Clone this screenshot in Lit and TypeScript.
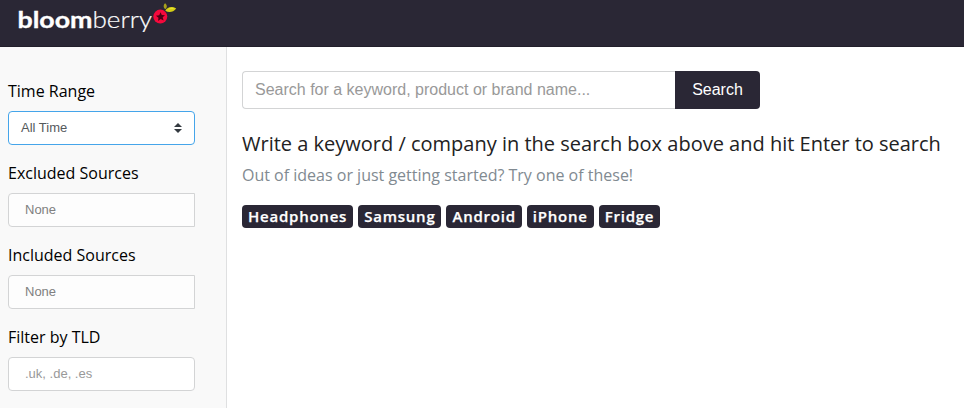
import { LitElement, html, css } from "lit";
import { customElement } from "lit/decorators.js";

@customElement("brand-logo")
class BrandLogo extends LitElement {
  static styles = css`
    :host { display: block; height: 36px; }
    svg { display: block; }
    text { font-family: Lato, sans-serif; fill: #fff; font-size: 23px; }
    .bold { font-weight: 700; stroke: #fff; stroke-width: 0.35px; }
    .light { font-weight: 300; stroke: #fff; stroke-width: 0.2px; }
  `;
  render() {
    return html`<svg width="162" height="36" viewBox="16 0 162 36">
      <text class="bold" x="17.500" y="28" textLength="75" lengthAdjust="spacingAndGlyphs">bloom</text>
      <text class="light" x="92.500" y="28" textLength="59.500" lengthAdjust="spacingAndGlyphs">berry</text>
      <circle cx="160.300" cy="16.600" r="7" fill="#f5093c" />
      <path d="M160.600 12.200l1.200 2.900 3.200.1-2.300 2.100.9 3.300-2.900-1.600-2.700 2.100.5-3.400-2.600-1.900 3.300-.6z" fill="#4a0014" />
      <path d="M165.300 9.300C163 7.500 163.300 4.800 165.200 3.300C167.300 5 167.600 7.400 165.300 9.300Z" fill="#a8a01c" />
      <path d="M165.300 10.800C167.500 7 171.500 5.900 176.200 8.500C173.500 12.300 168.800 13.100 165.300 10.800Z" fill="#d5cf16" />
      <path d="M167.500 9.600Q171 7.300 175 8.500Q171 8.700 167.500 9.600Z" fill="#f3ee4a" />
    </svg>`;
  }
}

@customElement("app-root")
class AppRoot extends LitElement {
  static styles = css`
    :host {
      display: flex;
      flex-direction: column;
      height: 408px;
      overflow: hidden;
      background: #fff;
      font-family: "Open Sans", sans-serif;
      font-size: 16px;
      line-height: 24px;
      color: #212529;
    }
    * { box-sizing: border-box; }
    header {
      flex: none;
      height: 47px;
      padding-left: 16px;
      background: #2a2735;
      border-bottom: 1px solid #221f2b;
    }
    .body { flex: 1; display: flex; min-height: 0; }
    aside {
      flex: none;
      width: 227px;
      padding: 32px 31px 0 8px;
      background: #f9f9f9;
      border-right: 1px solid #dfe0e1;
      color: #000;
    }
    .field { margin-bottom: 16px; }
    .label { display: block; margin-bottom: 8px; white-space: nowrap; }
    .control {
      display: flex;
      align-items: center;
      justify-content: space-between;
      width: 187px;
      height: 34px;
      padding: 0 12px 0 16px;
      border: 1px solid #d3d4d5;
      border-radius: 4px;
      background: #fff;
      font: 13px/20px "Liberation Sans", Arial, sans-serif;
      color: #999;
    }
    .select { padding-left: 12px; border-color: #45a5ea; color: #55595c; }
    .tags { border-radius: 4px 0 0 4px; background: #fdfdfd; color: #808080; }
    main { flex: 1; padding: 24px 0 0 15px; white-space: nowrap; }
    .search { display: flex; width: 518px; height: 38px; font: 16px/36px "Liberation Sans", Arial, sans-serif; }
    .query {
      flex: 1;
      padding-left: 12px;
      border: 1px solid #d3d4d5;
      border-right: 0;
      border-radius: 4px 0 0 4px;
      color: #999;
    }
    .go {
      width: 85px;
      padding-top: 1px;
      text-align: center;
      background: #2a2735;
      color: #fff;
      border-radius: 0 4px 4px 0;
    }
    h1 { margin: 23px 0 0; font-size: 20px; line-height: 24px; font-weight: 400; color: #222; }
    p { margin: 7px 0 0; color: #818a91; }
    .chips { display: flex; gap: 5px; margin-top: 18px; }
    .chip {
      height: 23px;
      padding: 0 6px;
      border-radius: 4px;
      background: #2a2735;
      color: #fff;
      font-size: 15px;
      line-height: 23px;
      font-weight: 600;
      letter-spacing: 0.77px;
      -webkit-text-stroke: 0.25px #fff;
    }
  `;

  private suggestions = ["Headphones", "Samsung", "Android", "iPhone", "Fridge"];

  private fields = [
    { label: "Time Range", text: "All Time", kind: "select" },
    { label: "Excluded Sources", text: "None", kind: "tags" },
    { label: "Included Sources", text: "None", kind: "tags" },
    { label: "Filter by TLD", text: ".uk, .de, .es", kind: "plain" },
  ];

  render() {
    return html`
      <header><brand-logo></brand-logo></header>
      <div class="body">
        <aside>
          ${this.fields.map(
            (f) => html`<div class="field">
              <span class="label">${f.label}</span>
              <div class="control ${f.kind}">
                <span>${f.text}</span>
                ${f.kind === "select"
                  ? html`<svg width="8" height="10" viewBox="0 0 8 10"><path d="M0 4L4 0l4 4zM0 6h8L4 10z" fill="#343a40" /></svg>`
                  : null}
              </div>
            </div>`
          )}
        </aside>
        <main>
          <div class="search">
            <div class="query">Search for a keyword, product or brand name...</div>
            <div class="go">Search</div>
          </div>
          <h1>Write a keyword / company in the search box above and hit Enter to search</h1>
          <p>Out of ideas or just getting started? Try one of these!</p>
          <div class="chips">${this.suggestions.map((s) => html`<span class="chip">${s}</span>`)}</div>
        </main>
      </div>
    `;
  }
}
